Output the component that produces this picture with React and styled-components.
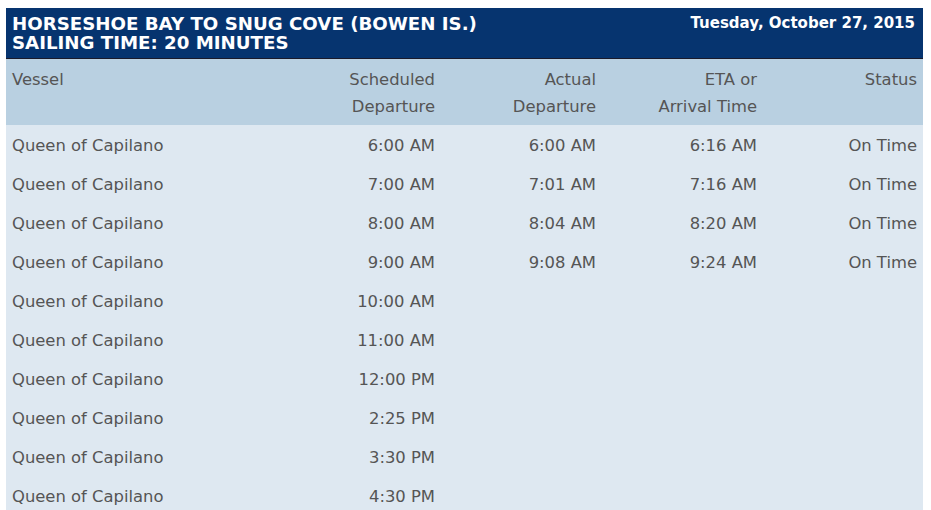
import React from "react";
import styled, { createGlobalStyle } from "styled-components";

const Global = createGlobalStyle`
  html, body { margin: 0; padding: 0; background: #ffffff; }
  body { font-family: "DejaVu Sans", Verdana, sans-serif; }
`;

const Page = styled.div`
  padding: 8px 0 0 6px;
  width: 917px;
`;

const TitleBar = styled.div`
  display: flex;
  justify-content: space-between;
  align-items: flex-start;
  background: #06346f;
  border-bottom: 1px solid #1a1a2a;
  padding: 6px 8px 0 6px;
  height: 44px;
`;

const Title = styled.h1`
  margin: 0;
  color: #ffffff;
  font-size: 18.2px;
  font-weight: bold;
  line-height: 19px;
`;

const DateText = styled.div`
  color: #ffffff;
  font-size: 15px;
  font-weight: bold;
  line-height: 18px;
`;

const Table = styled.table`
  width: 917px;
  border-collapse: collapse;
  table-layout: fixed;
  color: #555555;
  font-size: 16.4px;
`;

const Col = styled.col`
  width: ${(p) => p.$w}px;
`;

const HeadRow = styled.tr`
  background: #b9d0e1;
`;

const HeadCell = styled.th`
  font-weight: normal;
  vertical-align: top;
  text-align: ${(p) => (p.$left ? "left" : "right")};
  padding: 7px 6px 5px 6px;
  line-height: 27px;
`;

const BodyRow = styled.tr`
  background: #dee8f1;
`;

const Cell = styled.td`
  text-align: ${(p) => (p.$left ? "left" : "right")};
  padding: 7px 6px 5px 6px;
  line-height: 27px;
  height: 27px;
  white-space: nowrap;
`;

const rows = [
  ["6:00 AM", "6:00 AM", "6:16 AM", "On Time"],
  ["7:00 AM", "7:01 AM", "7:16 AM", "On Time"],
  ["8:00 AM", "8:04 AM", "8:20 AM", "On Time"],
  ["9:00 AM", "9:08 AM", "9:24 AM", "On Time"],
  ["10:00 AM", "", "", ""],
  ["11:00 AM", "", "", ""],
  ["12:00 PM", "", "", ""],
  ["2:25 PM", "", "", ""],
  ["3:30 PM", "", "", ""],
  ["4:30 PM", "", "", ""],
];

export default function App() {
  return (
    <>
      <Global />
      <Page>
        <TitleBar>
          <Title>
            HORSESHOE BAY TO SNUG COVE (BOWEN IS.)
            <br />
            SAILING TIME: 20 MINUTES
          </Title>
          <DateText>Tuesday, October 27, 2015</DateText>
        </TitleBar>
        <Table>
          <colgroup>
            <Col $w={274} />
            <Col $w={161} />
            <Col $w={161} />
            <Col $w={161} />
            <Col $w={160} />
          </colgroup>
          <thead>
            <HeadRow>
              <HeadCell $left>Vessel</HeadCell>
              <HeadCell>
                Scheduled
                <br />
                Departure
              </HeadCell>
              <HeadCell>
                Actual
                <br />
                Departure
              </HeadCell>
              <HeadCell>
                ETA or
                <br />
                Arrival Time
              </HeadCell>
              <HeadCell>Status</HeadCell>
            </HeadRow>
          </thead>
          <tbody>
            {rows.map((r, i) => (
              <BodyRow key={i}>
                <Cell $left>Queen of Capilano</Cell>
                <Cell>{r[0]}</Cell>
                <Cell>{r[1]}</Cell>
                <Cell>{r[2]}</Cell>
                <Cell>{r[3]}</Cell>
              </BodyRow>
            ))}
          </tbody>
        </Table>
      </Page>
    </>
  );
}
